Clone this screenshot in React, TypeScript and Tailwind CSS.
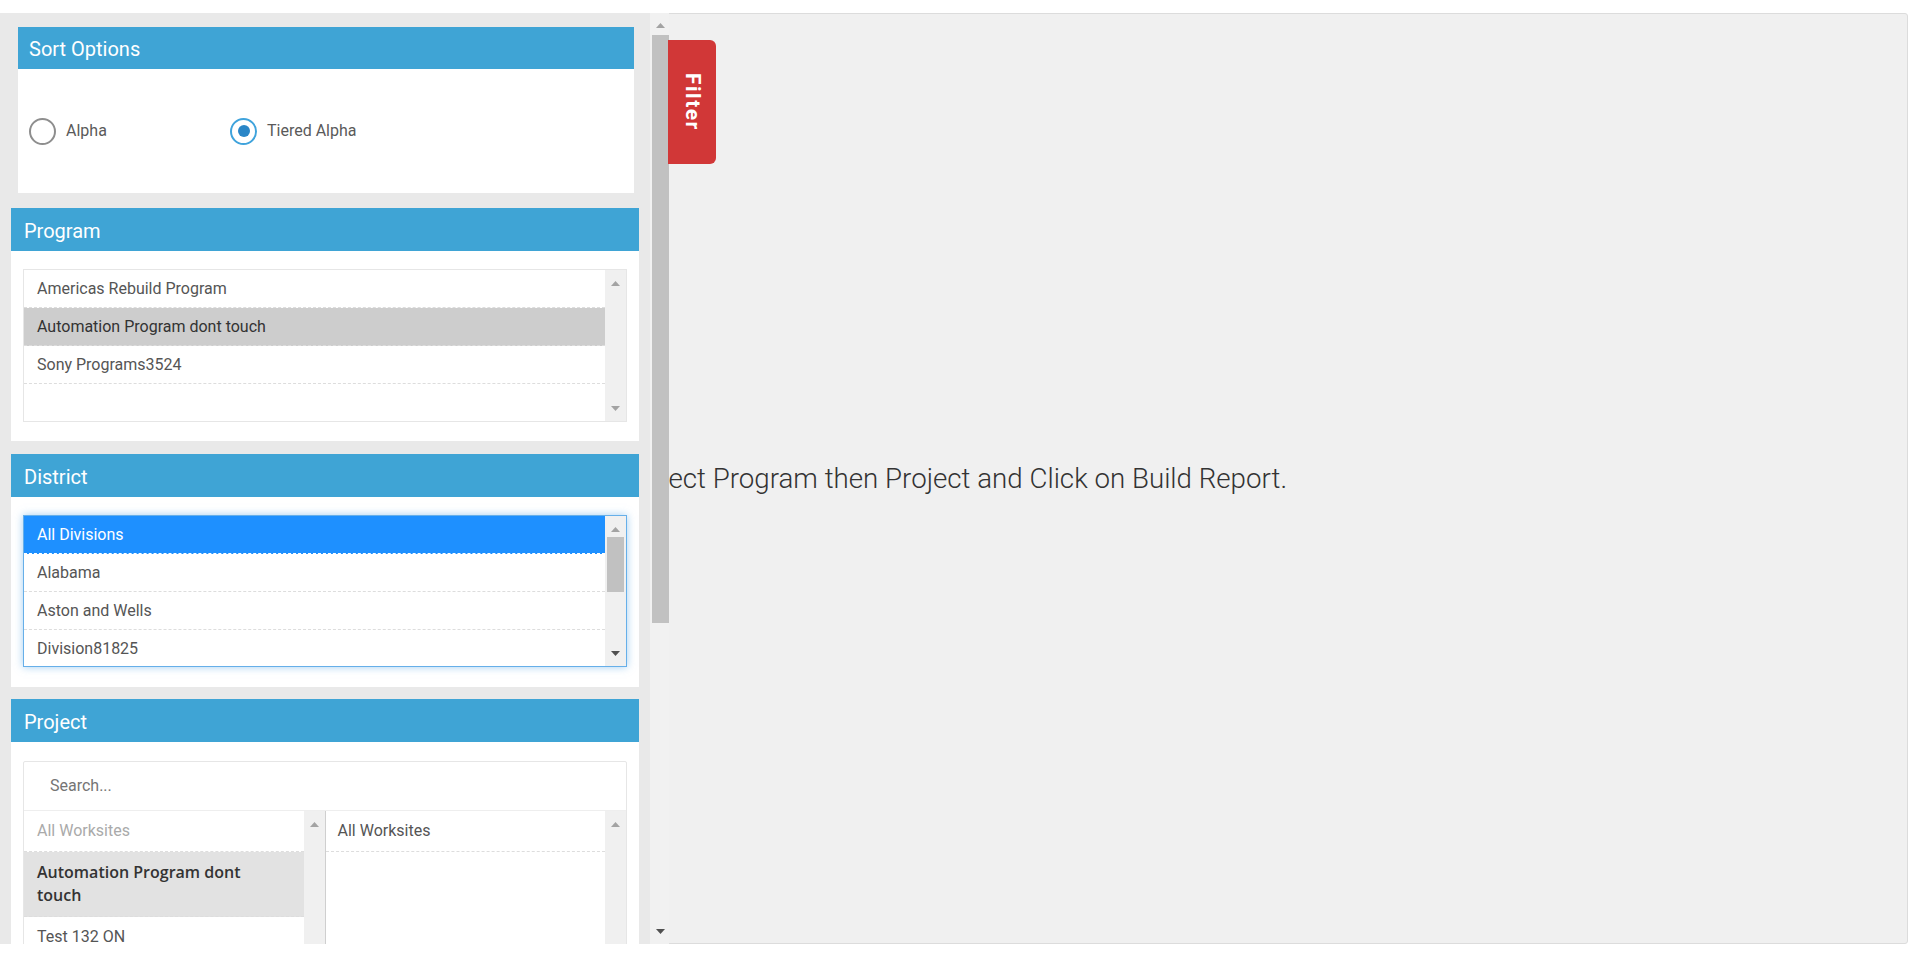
import React from "react";

function Arrow({ dir, dark }: { dir: "up" | "down"; dark?: boolean }) {
  return (
    <svg width="9" height="5" viewBox="0 0 9 5" className="block shrink-0">
      <polygon
        points={dir === "up" ? "0,5 4.5,0 9,5" : "0,0 9,0 4.5,5"}
        fill={dark ? "#505050" : "#a3a3a3"}
      />
    </svg>
  );
}

function Track({ thumb, darkDown, noDown }: { thumb?: string; darkDown?: boolean; noDown?: boolean }) {
  return (
    <div className="relative w-[21px] shrink-0 bg-[#f0f0f0] flex flex-col items-center justify-between pt-[11px] pb-[10px]">
      <Arrow dir="up" />
      {thumb && <div className={"absolute left-[2px] w-[17px] bg-[#c1c1c1] " + thumb} />}
      {!noDown && <Arrow dir="down" dark={darkDown} />}
    </div>
  );
}

function CardHeader({ title, pad }: { title: string; pad: string }) {
  return (
    <div className={"bg-[#3fa4d5] text-white text-[20px] flex items-center " + pad}>
      {title}
    </div>
  );
}

function Row({ label, selected }: { label: string; selected?: "gray" | "blue" }) {
  const tone =
    selected === "gray"
      ? "bg-[#cdcdcd] text-[#333]"
      : selected === "blue"
      ? "bg-[#1e90ff] text-white border-white"
      : "text-[#555]";
  return (
    <div className={"h-[38px] shrink-0 flex items-center pl-[13px] text-[16px] border-b border-dashed border-[#ddd] " + tone}>
      {label}
    </div>
  );
}

function Radio({ label, checked }: { label: string; checked?: boolean }) {
  return (
    <div className="w-[201px] flex items-center gap-[10px]">
      <div
        className={
          "w-[27px] h-[27px] rounded-full border-[2.5px] flex items-center justify-center " +
          (checked ? "border-[#3fa3dc]" : "border-[#8e8e8e]")
        }
      >
        {checked && <div className="w-[12px] h-[12px] rounded-full bg-[#2a86c7]" />}
      </div>
      <span className="text-[16px] text-[#5a5a5a]">{label}</span>
    </div>
  );
}

function Sidebar() {
  return (
    <div className="absolute -top-px -left-px bottom-[-1px] w-[669px] flex">
      <div className="w-[650px] bg-[#e9e9e9] overflow-hidden flex flex-col pt-[14px] px-[11px]">
        {/* sort options */}
        <div className="ml-[7px] mr-[5px] bg-white shrink-0">
          <CardHeader title="Sort Options" pad="h-[42px] pl-[11px] pt-[2px]" />
          <div className="h-[124px] flex items-center pl-[11px]">
            <Radio label="Alpha" />
            <Radio label="Tiered Alpha" checked />
          </div>
        </div>

        {/* program */}
        <div className="mt-[15px] bg-white shrink-0">
          <CardHeader title="Program" pad="h-[43px] pl-[13px] pt-[2px]" />
          <div className="px-[12px] pt-[18px] pb-[19px]">
            <div className="h-[153px] border border-[#e6e6e6] flex overflow-hidden">
              <div className="flex-1 flex flex-col">
                <Row label="Americas Rebuild Program" />
                <Row label="Automation Program dont touch" selected="gray" />
                <Row label="Sony Programs3524" />
                <div className="h-[38px]" />
              </div>
              <Track />
            </div>
          </div>
        </div>

        {/* district */}
        <div className="mt-[13px] bg-white shrink-0">
          <CardHeader title="District" pad="h-[43px] pl-[13px] pt-[2px]" />
          <div className="px-[12px] pt-[18px] pb-[20px]">
            <div className="h-[152px] border border-[#66afe9] shadow-[0_0_8px_rgba(102,175,233,0.6)] flex overflow-hidden">
              <div className="flex-1 flex flex-col">
                <Row label="All Divisions" selected="blue" />
                <Row label="Alabama" />
                <Row label="Aston and Wells" />
                <Row label="Division81825" />
              </div>
              <Track thumb="top-[21px] h-[55px]" darkDown />
            </div>
          </div>
        </div>

        {/* project */}
        <div className="mt-[12px] bg-white shrink-0">
          <CardHeader title="Project" pad="h-[43px] pl-[13px] pt-[2px]" />
          <div className="px-[12px] pt-[19px]">
            <div className="border border-[#e6e6e6] rounded-[2px]">
              <div className="h-[49px] flex items-center pl-[26px] text-[16px] text-[#757575] border-b border-[#eee]">
                Search...
              </div>
              <div className="flex h-[260px]">
                <div className="flex-1 flex flex-col">
                  <div className="h-[41px] flex items-center pl-[13px] text-[16px] text-[#aaa] border-b border-dashed border-[#ddd]">
                    All Worksites
                  </div>
                  <div className="bg-[#e2e2e2] pl-[13px] pr-[30px] py-[9px] leading-[23px] text-[16px] font-semibold text-[#333] font-['Open_Sans',sans-serif] border-b border-dashed border-[#ddd]">
                    Automation Program dont touch
                  </div>
                  <div className="h-[40px] flex items-center pl-[13px] text-[16px] text-[#555]">
                    Test 132 ON
                  </div>
                </div>
                <Track noDown />
                <div className="w-px bg-[#cfcfcf]" />
                <div className="flex-1 flex flex-col">
                  <div className="h-[41px] flex items-center pl-[12px] text-[16px] text-[#555] border-b border-dashed border-[#ddd]">
                    All Worksites
                  </div>
                </div>
                <Track noDown />
              </div>
            </div>
          </div>
        </div>
      </div>

      {/* sidebar scrollbar */}
      <div className="relative w-[19px] bg-[#f1f1f1] flex flex-col items-center justify-between pt-[10px] pb-[10px] pl-[2px]">
        <Arrow dir="up" />
        <div className="absolute left-[2px] top-[22px] w-[17px] h-[588px] bg-[#c1c1c1]" />
        <Arrow dir="down" dark />
      </div>
    </div>
  );
}

export default function App() {
  return (
    <div className="w-full h-screen bg-white pt-[13px] font-['Roboto',sans-serif]">
      <div className="relative h-[931px] mr-[12px] border border-[#dcdcdc] rounded-[3px] bg-[#f0f0f0]">
        <div className="h-full flex items-center pl-[543px]">
          <p className="text-[27.7px] font-light text-[#333] leading-[34px]">
            Please Select Program then Project and Click on Build Report.
          </p>
        </div>

        <Sidebar />

        <div className="absolute left-[667px] top-[26px] w-[48px] h-[124px] bg-[#d13737] rounded-r-[6px] flex items-center justify-center">
          <span className="[writing-mode:vertical-rl] text-white font-bold text-[21px] tracking-[1.5px]">
            Filter
          </span>
        </div>
      </div>
    </div>
  );
}
